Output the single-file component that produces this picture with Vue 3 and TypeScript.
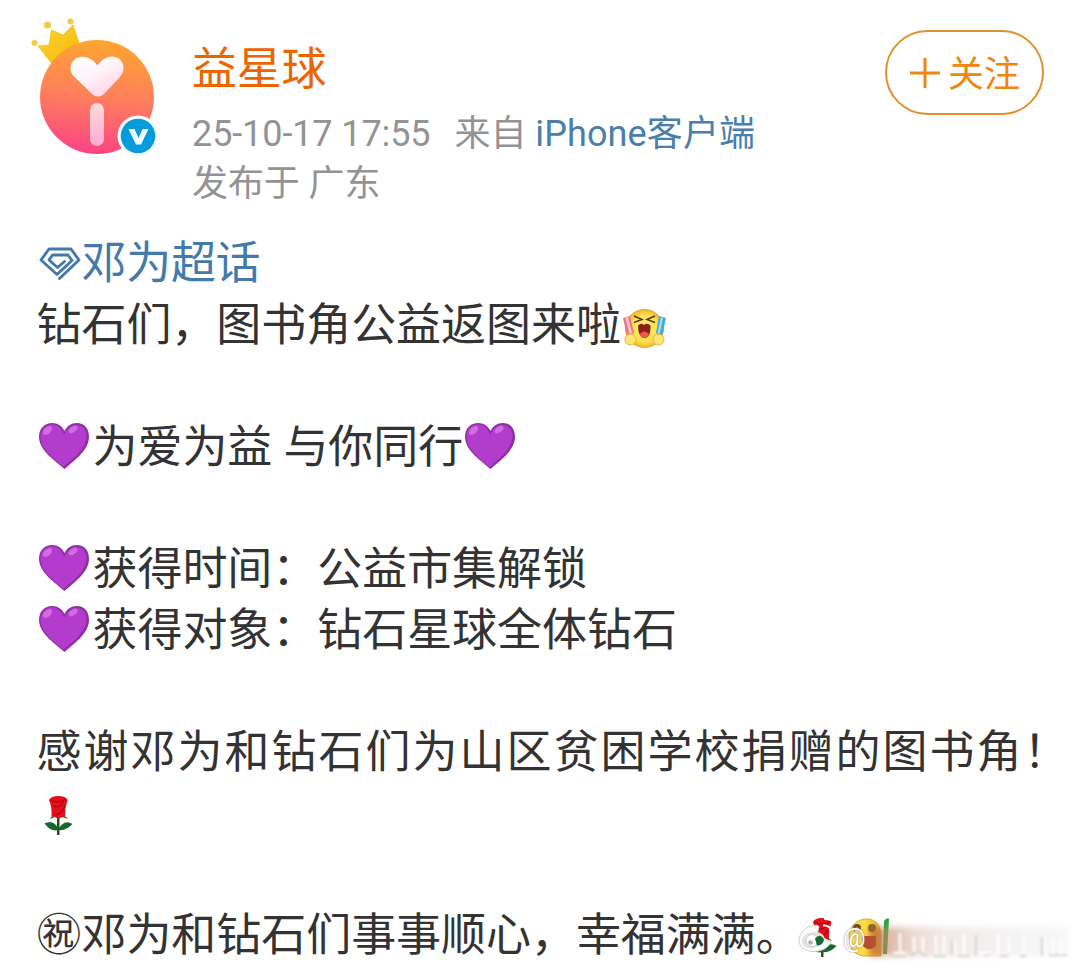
<script setup lang="ts">
type Part = { kind: 'text' | 'heart' | 'cheer' | 'rose' | 'gem' | 'face'; text?: string }
interface Line { parts: Part[]; style?: string }

const t = (text: string): Part => ({ kind: 'text', text })
const icon = (kind: Part['kind']): Part => ({ kind })

const lines: Line[] = [
  { parts: [icon('gem'), t('邓为超话')], style: 'topic' },
  { parts: [t('钻石们，图书角公益返图来啦'), icon('cheer')] },
  { parts: [] },
  { parts: [icon('heart'), t('为爱为益 与你同行'), icon('heart')] },
  { parts: [] },
  { parts: [icon('heart'), t('获得时间：公益市集解锁')] },
  { parts: [icon('heart'), t('获得对象：钻石星球全体钻石')] },
  { parts: [] },
  { parts: [t('感谢邓为和钻石们为山区贫困学校捐赠的图书角！')], style: 'wide' },
  { parts: [icon('rose')] },
  { parts: [] },
  { parts: [t('㊗邓为和钻石们事事顺心，幸福满满。'), icon('rose'), icon('face')] },
]
</script>

<template>
  <main class="post">
    <header class="head">
      <svg class="avatar" viewBox="0 0 132 140">
        <defs>
          <linearGradient id="disc" x1=".55" y1="0" x2=".45" y2="1">
            <stop offset="0" stop-color="#fda62f" />
            <stop offset=".5" stop-color="#ff7f5c" />
            <stop offset="1" stop-color="#fb4386" />
          </linearGradient>
          <linearGradient id="crown" x1="0" y1="0" x2="1" y2="1">
            <stop offset="0" stop-color="#ffd52e" />
            <stop offset="1" stop-color="#f5b50b" />
          </linearGradient>
          <linearGradient id="hrt" x1="0" y1="0" x2=".7" y2="1">
            <stop offset="0" stop-color="#fff" />
            <stop offset=".5" stop-color="#fff4fa" />
            <stop offset="1" stop-color="#ffd3e6" />
          </linearGradient>
          <linearGradient id="stick" x1="0" y1="0" x2="0" y2="1">
            <stop offset="0" stop-color="#ffd9da" />
            <stop offset="1" stop-color="#ffabd3" />
          </linearGradient>
        </defs>
        <path d="M7 21 18 20 20.500 5 32 10 42 0 48 18 50 30 22 40Z" fill="url(#crown)" stroke="#fbc81f" stroke-linejoin="round" />
        <g fill="#f5ca43"><circle cx="3.500" cy="18" r="3" /><circle cx="16.500" cy="0" r="3.600" /><circle cx="39.500" cy="-3.500" r="3" /></g>
        <circle cx="66" cy="72" r="57" fill="url(#disc)" />
        <path d="M66.500 40.500C61 32 51 29.500 45 33.500C38 38 38 46.500 43 51.500L61 69Q67 74 73 69L89 52C95 45 93 37 87 33C79 29 72 33 66.500 40.500Z" fill="url(#hrt)" />
        <rect x="59" y="78" width="14" height="43" rx="7" fill="url(#stick)" />
        <circle cx="107" cy="111" r="20.500" fill="#f5ffff" />
        <circle cx="107" cy="111" r="17.300" fill="#079bdc" />
        <path d="M97.500 104H103.500L107.500 113 111.500 104H117.500L110 119.500H105Z" fill="#f5ffff" />
      </svg>
      <div class="info">
        <div class="name">益星球</div>
        <div class="meta"><span>25-10-17 17:55</span><span class="from">来自</span><a>iPhone客户端</a></div>
        <div class="meta">发布于 广东</div>
      </div>
      <button class="follow">
        <svg viewBox="0 0 32 32"><path d="M16 1V31M1 16H31" stroke="currentColor" stroke-width="3" /></svg>
        <span>关注</span>
      </button>
    </header>

    <article class="body">
      <p v-for="(line, i) in lines" :key="i" class="line" :class="line.style">
        <template v-for="(p, j) in line.parts" :key="j">
          <span v-if="p.kind === 'text'">{{ p.text }}</span>
          <svg v-else-if="p.kind === 'gem'" class="gem" viewBox="0 0 45 40">
            <path
              d="M22.500 35.500 42 17 34 6H12L4 17 20 31.500 35 17.500 31 12H15.500L12 17 20.500 24.500 27.500 18.500"
              fill="none" stroke="#427aac" stroke-width="2.900" stroke-linejoin="round" stroke-linecap="round"
            />
          </svg>
          <svg v-else-if="p.kind === 'heart'" class="heart" viewBox="0 0 56 52">
            <path d="M27.500 48C20 41 2 30 2 16C2 7 8 2 15 2C21 2 25 5 27.500 10C30 5 34 2 40 2C47 2 52 7 52 16C52 30 35 41 27.500 48Z" fill="#8f2fa5" />
            <path d="M26.500 46C19 39 3.500 29 3.500 16C3.500 8 9 3.500 15 3.500C21 3.500 25 8 27 14C30 8 34 4 39 4C46 4 49.500 9 49.500 15C49 29 33 40 26.500 46Z" fill="#b43ccd" />
            <ellipse cx="10.500" cy="9.500" rx="5.500" ry="3.200" transform="rotate(-42 10.500 9.500)" fill="#d36be3" />
            <ellipse cx="36" cy="8.500" rx="5" ry="2.800" transform="rotate(-35 36 8.500)" fill="#d36be3" />
          </svg>
          <svg v-else-if="p.kind === 'cheer'" class="emoji cheer" viewBox="0 0 45 45">
            <defs>
              <radialGradient id="yellow"><stop offset="0" stop-color="#fff263" /><stop offset=".7" stop-color="#ffe052" /><stop offset="1" stop-color="#f3b72c" /></radialGradient>
            </defs>
            <circle cx="22.500" cy="21.500" r="19" fill="url(#yellow)" stroke="#dfa430" />
            <path d="M1 11 8 9 12 26 5 29Z" fill="#f07584" /><path d="M3.500 11 6 10 10 26 7.500 27Z" fill="#fac4c7" />
            <path d="M37 9 44 11 40 29 34 26Z" fill="#42acd5" /><path d="M39 10 41 11 37.500 27 35.500 26Z" fill="#a8e1ee" />
            <path d="m12 9 8 3.500-8 3M33 9l-8 3.500 8 3" fill="none" stroke="#5c351b" stroke-width="1.500" />
            <path d="M16 18.500Q19 15.500 22 18Q25 15.500 28.500 18.500Q29 31 22 31Q16 30 16 18.500Z" fill="#8c211b" />
            <path d="M18 27Q22 22 27 27Q26 30.500 22 30.500Q19 30.500 18 27Z" fill="#f15a48" />
            <circle cx="8.500" cy="32.500" r="5.500" fill="#ffe576" stroke="#e8b13b" /><circle cx="36.500" cy="32.500" r="5.500" fill="#ffe576" stroke="#e8b13b" />
          </svg>
          <svg v-else-if="p.kind === 'rose'" class="emoji" viewBox="0 0 45 45">
            <path d="M20 22H22.500V41H20Z" fill="#2c4c20" />
            <path d="M21 36Q14 38 7.500 29.500Q16 25 21 34ZM22 36Q29 37 35.500 30Q28 25 22 34Z" fill="#14692d" />
            <path d="M13 25Q15 20 21 21Q27 20 31 25L25 23 21 25 18 23Z" fill="#5d652c" />
            <path d="M12 6Q14 2 21 2Q29 2 30.500 6Q28 13 28 22Q22 25 14.500 22Q15 13 12 6Z" fill="#e90d18" />
            <path d="M13 6Q21 10 29 5M16 12Q23 15 27 7M18 21Q25 20 28 12" fill="none" stroke="#a70914" stroke-width="1.200" />
          </svg>
          <svg v-else class="emoji" viewBox="0 0 45 45">
            <defs><linearGradient id="fade" x1="0" x2="1"><stop offset=".5" stop-color="#fbdc45" /><stop offset="1" stop-color="#e2b22b" /></linearGradient></defs>
            <path d="M38 5Q41 1 43 3L41 38H37Z" fill="#23aa38" />
            <path d="M3 20C4 9 12 3 21 3C31 3 36 11 35 24L35 40H17Q3 38 3 20Z" fill="url(#fade)" stroke="#d6aa37" />
            <circle cx="11" cy="12" r="4" fill="#704b29" /><circle cx="26" cy="12" r="4" fill="#8a6b29" /><circle cx="11" cy="14" r="2.500" fill="#ffc4bd" />
            <path d="M16 20H30V30Q23 37 16 29Z" fill="#b5502c" />
          </svg>
        </template>
      </p>
    </article>

    <div class="watermark">
      <svg class="weibo" viewBox="0 0 44 42">
        <path d="M17 12C9 12 2 20 2 27C2 34 9 38 17 38C25 38 31 34 34 29L28 25 20 22 22 13Q20 11 17 12Z" fill="#fbfbfb" stroke="#cfcfcf" />
        <ellipse cx="16" cy="26.500" rx="11.500" ry="8" fill="#e2e3e3" transform="rotate(-12 16 26.500)" />
        <circle cx="15" cy="27" r="6" fill="#fff" stroke="#ccc" /><circle cx="13.500" cy="29" r="2.300" fill="#a9b3ac" />
        <path d="M18 25Q23 19 27 26Q26 32 20 32Z" fill="#166b30" />
        <path d="M26 12Q34 11 34 20M27 5.500Q40 5 39.500 19" fill="none" stroke="#fff" stroke-width="2" />
      </svg>
      <span class="at">@</span>
      <span class="smear"></span>
      <svg class="ghost" viewBox="0 0 182 32">
        <g fill="none" stroke="#d2d2d2" stroke-width="2.500" opacity=".75">
          <path d="M4 29H18M22 29 28 25M31 25 39 29M46 29H58M64 14V28M70 29H82M88 8V29M96 29 104 26M112 29H120M132 29H138M154 10V29M161 28H179" />
        </g>
        <g fill="none" stroke="#fff" stroke-width="3" opacity=".75">
          <path d="M5 26H18M12 6V26M26 10V25M35 10V25M48 8V27M56 8V27M67 14V27M76 7V27M90 26H104M110 7V27M121 10V25M136 7V27M157 9V28M165 12V28M173 12V28" />
        </g>
      </svg>
    </div>
  </main>
</template>

<style>
body { margin: 0; background: #fff; }
</style>

<style scoped>
.post {
  position: relative;
  box-sizing: border-box;
  width: 1080px;
  height: 966px;
  overflow: hidden;
  background: #fff;
  color: #333;
  font-family: Roboto, "Noto Sans CJK SC", sans-serif;
}
.head { display: flex; height: 233px; padding: 0 36px 0 31px; box-sizing: border-box; }
.avatar { width: 132px; height: 140px; margin-top: 25px; overflow: visible; flex: none; }
.info { margin: 40px 0 0 29px; flex: 1; white-space: nowrap; }
.name { color: #eb6500; font-size: 45px; line-height: 60px; height: 69px; letter-spacing: -.2px; }
.meta { color: #939393; font-size: 36px; line-height: 50px; height: 50px; letter-spacing: -.1px; }
.from { margin: 0 9px 0 24px; }
.meta a { color: #4a7eab; letter-spacing: .12px; }
.follow {
  display: flex;
  align-items: center;
  justify-content: center;
  gap: 7px;
  box-sizing: border-box;
  width: 159px;
  height: 85px;
  margin-top: 30px;
  padding: 0;
  border: 2px solid #df922f;
  border-radius: 43px;
  background: #fff;
  color: #ef860f;
  font: 36px/50px Roboto, "Noto Sans CJK SC", sans-serif;
}
.follow svg { width: 32px; height: 32px; }
.follow span { padding-top: 4px; }
.body { padding-left: 36.5px; font-size: 45px; }
.line { display: flex; align-items: center; height: 61px; margin: 0; line-height: 61px; white-space: nowrap; letter-spacing: -.05px; }
.line span { margin-top: 2px; }
.topic { color: #427aac; letter-spacing: -.3px; }
.topic span { margin-top: 0; }
.wide { letter-spacing: 2px; }
.gem { width: 45px; height: 40px; margin-top: -1px; }
.heart { width: 56px; height: 52px; margin-top: 1px; }
.emoji { width: 45px; height: 45px; margin-top: 8px; }
.cheer { margin: 10px 0 0 1px; }
.watermark { position: absolute; left: 797px; top: 912px; width: 283px; height: 48px; display: flex; }
.weibo { width: 44px; height: 45px; flex: none; }
.at { width: 26px; margin-left: 2px; color: #fff; font-size: 25px; line-height: 54px; text-shadow: 0 0 2px #777; flex: none; }
.smear {
  position: absolute;
  left: 73px;
  top: 15px;
  width: 198px;
  height: 29px;
  filter: blur(3px);
  background: linear-gradient(90deg, #ac452faa, #c98a6999 9%, #dfc3b799 22%, #ecdcd899 38%, #eeeaea99 70%, #f3f3f399);
}
.ghost { position: absolute; left: 91px; top: 15px; width: 182px; height: 32px; filter: blur(1px); }
</style>
